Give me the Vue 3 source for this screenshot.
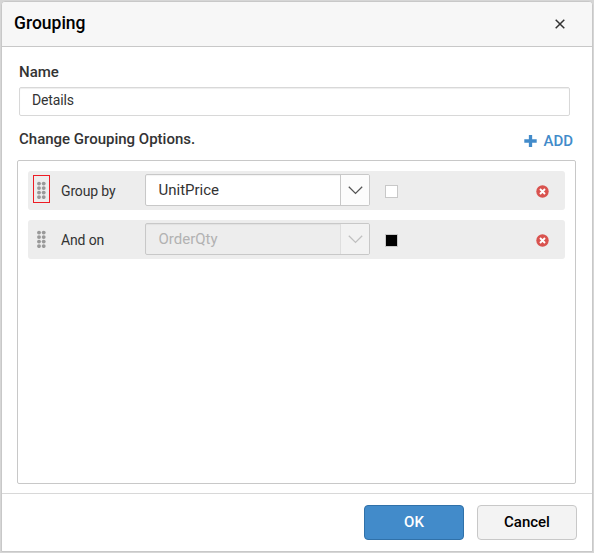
<script setup>
const rows = [
  { label: 'Group by', field: 'UnitPrice', active: true },
  { label: 'And on', field: 'OrderQty', active: false }
]
const dots = [0, 1, 2, 3]
</script>

<template>
  <div class="backdrop">
    <section class="dialog">
      <header class="head">
        <h1 class="title">Grouping</h1>
        <svg class="close" width="10" height="10" viewBox="0 0 10 10">
          <path d="M0.7 0.7L9.3 9.3M9.3 0.7L0.7 9.3" stroke="#333" stroke-width="1.5" />
        </svg>
      </header>
      <main class="body">
        <div class="label">Name</div>
        <div class="input"><span>Details</span></div>
        <div class="options">
          <span class="label-text">Change Grouping Options.</span>
          <span class="add">
            <svg width="13" height="12" viewBox="0 0 13 12">
              <path d="M6.5 0V12M0.3 6H12.7" stroke="#428bca" stroke-width="3.3" />
            </svg>
            <span>ADD</span>
          </span>
        </div>
        <div class="list">
          <div v-for="row in rows" :key="row.label" class="row">
            <span class="handle" :class="{ selected: row.active }">
              <svg width="10" height="18" viewBox="0 0 10 18">
                <g v-for="n in dots" :key="n" fill="#999">
                  <circle cx="2" :cy="2.6 + n * 4.5" r="1.95" />
                  <circle cx="6.7" :cy="2.6 + n * 4.5" r="1.95" />
                </g>
              </svg>
            </span>
            <span class="row-label">{{ row.label }}</span>
            <div class="select" :class="{ disabled: !row.active }">
              <span class="value">{{ row.field }}</span>
              <span class="arrow">
                <svg width="15" height="9" viewBox="0 0 15 9">
                  <path d="M0.8 0.8L7.5 7.4L14.2 0.8" fill="none" stroke="currentColor" stroke-width="1.3" />
                </svg>
              </span>
            </div>
            <span class="check" :class="{ filled: !row.active }"></span>
            <svg class="remove" width="13" height="13" viewBox="0 0 13 13">
              <circle cx="6.5" cy="6.5" r="6.2" fill="#d9534f" />
              <path d="M4 4L9 9M9 4L4 9" stroke="#fff" stroke-width="1.9" />
            </svg>
          </div>
        </div>
      </main>
      <footer class="foot">
        <button class="btn primary">OK</button>
        <button class="btn">Cancel</button>
      </footer>
    </section>
  </div>
</template>

<style>
body {
  margin: 0;
}
</style>

<style scoped>
* {
  box-sizing: border-box;
}
.backdrop {
  width: 594px;
  height: 553px;
  padding: 1px;
  background: #d6d6d6;
  overflow: hidden;
  font-family: Roboto, "Liberation Sans", sans-serif;
}
.dialog {
  display: flex;
  flex-direction: column;
  width: 592px;
  height: 551px;
  background: #fff;
  border: 1px solid #c8c8c8;
  border-radius: 4px 4px 0 0;
  overflow: hidden;
}
.head {
  display: flex;
  align-items: center;
  justify-content: space-between;
  flex: none;
  height: 45px;
  padding: 0 27px 0 12px;
  background: #f7f7f7;
  border-bottom: 1px solid #c8c8c8;
}
.title {
  margin: 0 0 2px;
  font-size: 17.5px;
  line-height: 22px;
  font-weight: 500;
  color: #000;
}
.close {
  margin-top: 0;
}
.body {
  flex: 1;
  padding: 15px 15px 0;
}
.label {
  height: 25px;
  padding-left: 2px;
  font-size: 15px;
  line-height: 20px;
  font-weight: 500;
  color: #333;
}
.input {
  width: 551px;
  height: 29px;
  margin-left: 2px;
  padding-left: 12px;
  border: 1px solid #d8d8d8;
  border-radius: 2px;
  box-shadow: inset 0 1px 1px rgba(0, 0, 0, 0.07);
  font-size: 14px;
  line-height: 25px;
  letter-spacing: -0.15px;
  color: #333;
}
.options {
  display: flex;
  justify-content: space-between;
  height: 44px;
  padding: 13px 4px 0 2px;
  font-size: 15px;
  line-height: 20px;
  font-weight: 500;
  color: #333;
}
.add {
  display: flex;
  align-items: center;
  gap: 6px;
  height: 24px;
  color: #428bca;
}
.list {
  display: flex;
  flex-direction: column;
  gap: 10px;
  width: 559px;
  height: 324px;
  padding: 10px;
  border: 1px solid #c8c8c8;
  border-radius: 2px;
}
.row {
  display: flex;
  align-items: center;
  width: 537px;
  height: 39px;
  padding: 0 16px 0 5px;
  background: #ededed;
  border-radius: 3px;
}
.handle {
  display: flex;
  align-items: center;
  justify-content: center;
  width: 17px;
  height: 28px;
  margin-top: -3px;
  padding-top: 2px;
  border: 1px solid transparent;
}
.handle.selected {
  border-color: #ed1c24;
}
.row-label {
  width: 84px;
  margin-left: 11px;
  font-size: 14px;
  line-height: 20px;
  letter-spacing: -0.15px;
  color: #333;
}
.select {
  display: flex;
  width: 225px;
  height: 32px;
  margin-top: -1px;
  border: 1px solid #c8c8c8;
  border-radius: 2px;
  background: #fff;
  box-shadow: inset 0 1px 1px rgba(0, 0, 0, 0.05);
  color: #333;
  overflow: hidden;
}
.value {
  flex: 1;
  padding-left: 12.5px;
  font-size: 15px;
  line-height: 30px;
}
.arrow {
  display: flex;
  align-items: center;
  justify-content: center;
  width: 29px;
  padding-left: 1px;
  padding-top: 1px;
  border-left: 1px solid #c8c8c8;
  background: #fcfcfc;
  color: #555;
}
.disabled {
  background: #ededed;
  color: #b2b2b2;
}
.disabled .arrow {
  background: #f2f2f2;
  border-color: #dedede;
  color: #c0c0c0;
}
.check {
  width: 13px;
  height: 13px;
  margin: 2px 0 0 15px;
  border: 1px solid #c8c8c8;
  background: #fff;
}
.check.filled {
  background: #000;
}
.remove {
  margin: 2px 0 0 auto;
}
.foot {
  display: flex;
  justify-content: flex-end;
  gap: 13px;
  flex: none;
  height: 58px;
  padding: 11px 15px 0 0;
  border-top: 1px solid #d8d8d8;
}
.btn {
  width: 100px;
  height: 35px;
  padding: 0 0 1px;
  border: 1px solid #c8c8c8;
  border-radius: 4px;
  background: #f3f3f3;
  font-family: inherit;
  font-size: 15px;
  font-weight: 500;
  color: #000;
}
.primary {
  background: #428bca;
  border-color: #3071a9;
  color: #fff;
}
</style>
